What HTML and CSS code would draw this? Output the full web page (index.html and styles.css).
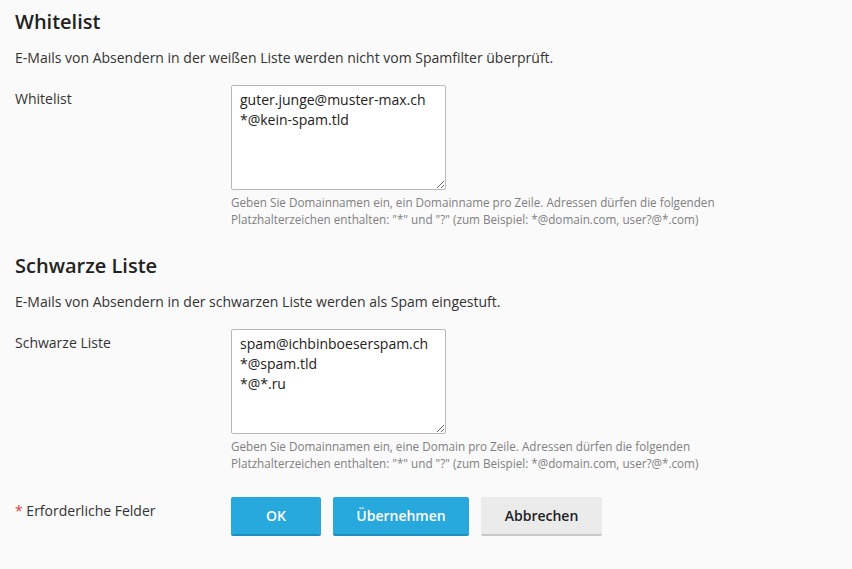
FILE: index.html
```html
<!DOCTYPE html>
<html lang="de">
<head>
<meta charset="utf-8">
<link rel="stylesheet" href="styles.css">
</head>
<body>
<div class="page">
  <section class="section">
    <h2 class="title">Whitelist</h2>
    <p class="desc">E-Mails von Absendern in der weißen Liste werden nicht vom Spamfilter überprüft.</p>
    <div class="row">
      <label class="label">Whitelist</label>
      <div class="field">
        <textarea class="area">guter.junge@muster-max.ch
*@kein-spam.tld</textarea>
        <div class="hint">Geben Sie Domainnamen ein, ein Domainname pro Zeile. Adressen dürfen die folgenden Platzhalterzeichen enthalten: "*" und "?" (zum Beispiel: *@domain.com, user?@*.com)</div>
      </div>
    </div>
  </section>
  <section class="section second">
    <h2 class="title">Schwarze Liste</h2>
    <p class="desc">E-Mails von Absendern in der schwarzen Liste werden als Spam eingestuft.</p>
    <div class="row">
      <label class="label">Schwarze Liste</label>
      <div class="field">
        <textarea class="area">spam@ichbinboeserspam.ch
*@spam.tld
*@*.ru</textarea>
        <div class="hint">Geben Sie Domainnamen ein, eine Domain pro Zeile. Adressen dürfen die folgenden Platzhalterzeichen enthalten: "*" und "?" (zum Beispiel: *@domain.com, user?@*.com)</div>
      </div>
    </div>
  </section>
  <div class="row footer">
    <div class="label"><span class="req">*</span> Erforderliche Felder</div>
    <div class="buttons">
      <button class="btn primary ok">OK</button>
      <button class="btn primary apply">Übernehmen</button>
      <button class="btn cancel">Abbrechen</button>
    </div>
  </div>
</div>
</body>
</html>
```
FILE: styles.css
```css
html, body {
  margin: 0;
  padding: 0;
  background: #fafafa;
}
body {
  font-family: "Open Sans", "Liberation Sans", sans-serif;
  color: #333;
  font-size: 14px;
}
.page {
  padding: 8px 15px 0 15px;
}
.title {
  margin: 0;
  font-size: 20px;
  font-weight: 600;
  line-height: 28px;
  color: #222;
}
.desc {
  margin: 12px 0 0 0;
  font-size: 14px;
  line-height: 20px;
  color: #333;
}
.row {
  display: flex;
  align-items: flex-start;
}
.section .row {
  margin-top: 17px;
}
.label {
  width: 216px;
  flex: none;
  padding-top: 4px;
  font-size: 14px;
  line-height: 20px;
  color: #333;
}
.field {
  width: 500px;
}
.area {
  display: block;
  box-sizing: border-box;
  width: 215px;
  height: 105px;
  margin: 0;
  padding: 4px 8px;
  border: 1px solid #b7b7b7;
  border-radius: 2px;
  background: #fff;
  font-family: "Open Sans", "Liberation Sans", sans-serif;
  font-size: 14px;
  line-height: 20px;
  color: #222;
  resize: vertical;
  overflow: hidden;
}
.hint {
  margin-top: 4px;
  font-size: 11.7px;
  line-height: 16.5px;
  color: #808080;
}
.second {
  margin-top: 25px;
}
.footer {
  margin-top: 26px;
}
.req {
  color: #e2403b;
}
.buttons {
  display: flex;
  gap: 12px;
}
.btn {
  box-sizing: border-box;
  height: 39px;
  border: 0;
  border-bottom: 2px solid #1f8fbf;
  border-radius: 2px;
  font-family: "Open Sans", "Liberation Sans", sans-serif;
  font-size: 14px;
  font-weight: 600;
  padding: 0;
}
.primary {
  background: #28a9dd;
  color: #fff;
}
.ok { width: 90px; }
.apply { width: 136px; }
.cancel {
  width: 121px;
  background: #ebebeb;
  color: #222;
  border-bottom-color: #c8c8c8;
}
```
